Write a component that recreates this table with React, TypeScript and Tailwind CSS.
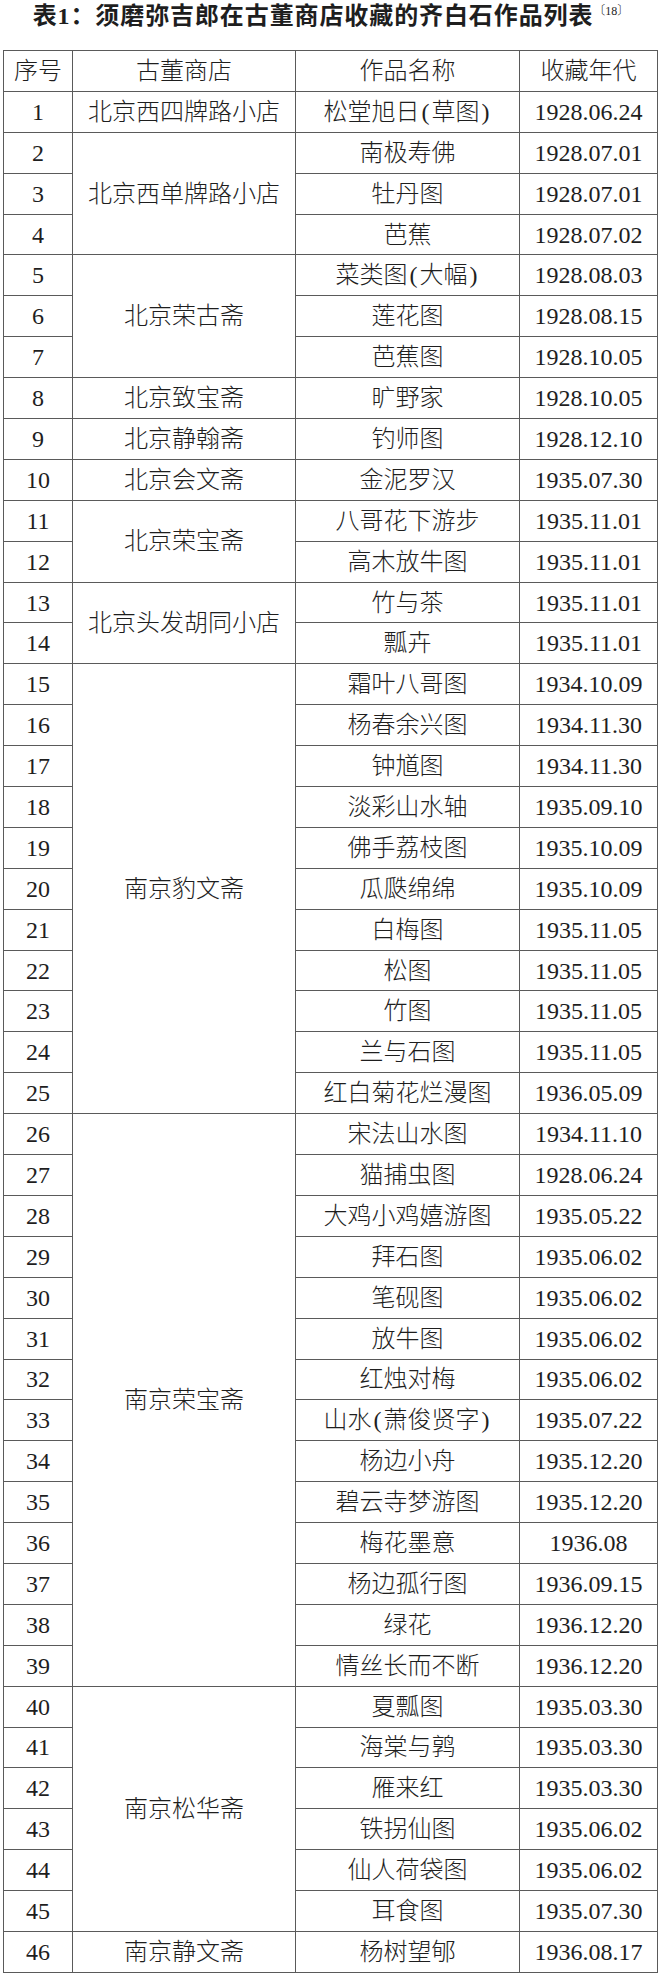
const groups: { store: string; items: [string, string][] }[] = [
  { store: "北京西四牌路小店", items: [["松堂旭日(草图)", "1928.06.24"]] },
  {
    store: "北京西单牌路小店",
    items: [
      ["南极寿佛", "1928.07.01"],
      ["牡丹图", "1928.07.01"],
      ["芭蕉", "1928.07.02"],
    ],
  },
  {
    store: "北京荣古斋",
    items: [
      ["菜类图(大幅)", "1928.08.03"],
      ["莲花图", "1928.08.15"],
      ["芭蕉图", "1928.10.05"],
    ],
  },
  { store: "北京致宝斋", items: [["旷野家", "1928.10.05"]] },
  { store: "北京静翰斋", items: [["钓师图", "1928.12.10"]] },
  { store: "北京会文斋", items: [["金泥罗汉", "1935.07.30"]] },
  {
    store: "北京荣宝斋",
    items: [
      ["八哥花下游步", "1935.11.01"],
      ["高木放牛图", "1935.11.01"],
    ],
  },
  {
    store: "北京头发胡同小店",
    items: [
      ["竹与茶", "1935.11.01"],
      ["瓢卉", "1935.11.01"],
    ],
  },
  {
    store: "南京豹文斋",
    items: [
      ["霜叶八哥图", "1934.10.09"],
      ["杨春余兴图", "1934.11.30"],
      ["钟馗图", "1934.11.30"],
      ["淡彩山水轴", "1935.09.10"],
      ["佛手荔枝图", "1935.10.09"],
      ["瓜瓞绵绵", "1935.10.09"],
      ["白梅图", "1935.11.05"],
      ["松图", "1935.11.05"],
      ["竹图", "1935.11.05"],
      ["兰与石图", "1935.11.05"],
      ["红白菊花烂漫图", "1936.05.09"],
    ],
  },
  {
    store: "南京荣宝斋",
    items: [
      ["宋法山水图", "1934.11.10"],
      ["猫捕虫图", "1928.06.24"],
      ["大鸡小鸡嬉游图", "1935.05.22"],
      ["拜石图", "1935.06.02"],
      ["笔砚图", "1935.06.02"],
      ["放牛图", "1935.06.02"],
      ["红烛对梅", "1935.06.02"],
      ["山水(萧俊贤字)", "1935.07.22"],
      ["杨边小舟", "1935.12.20"],
      ["碧云寺梦游图", "1935.12.20"],
      ["梅花墨意", "1936.08"],
      ["杨边孤行图", "1936.09.15"],
      ["绿花", "1936.12.20"],
      ["情丝长而不断", "1936.12.20"],
    ],
  },
  {
    store: "南京松华斋",
    items: [
      ["夏瓢图", "1935.03.30"],
      ["海棠与鹑", "1935.03.30"],
      ["雁来红", "1935.03.30"],
      ["铁拐仙图", "1935.06.02"],
      ["仙人荷袋图", "1935.06.02"],
      ["耳食图", "1935.07.30"],
    ],
  },
  { store: "南京静文斋", items: [["杨树望郇", "1936.08.17"]] },
];

const cell = "border border-[#5a5a5a] text-center align-middle p-0 h-[40.9px]";

// parens in the scan sit a bit loose from the characters around them
function Work({ text }: { text: string }) {
  return (
    <>
      {text.split(/([()])/).map((part, i) =>
        part === "(" || part === ")" ? (
          <span key={i} className="px-[2px]">
            {part}
          </span>
        ) : (
          part
        )
      )}
    </>
  );
}

export default function App() {
  let n = 0;
  return (
    <div className="w-[660px] bg-white text-[#1e1e1e] font-['Liberation_Serif','Noto_Sans_CJK_SC',serif]">
      <div className="h-[50px] flex justify-center items-start pt-[2px] pl-[2px]">
        <h1 className="text-[24px] leading-[29px] font-bold tracking-[0.9px]">表1：须磨弥吉郎在古董商店收藏的齐白石作品列表</h1>
        <span className="text-[12px] leading-none mt-[3px] font-light whitespace-nowrap">〔18〕</span>
      </div>
      <table className="ml-[3px] w-[654px] border-collapse table-fixed text-[24px] leading-none font-light">
        <colgroup>
          <col className="w-[69px]" />
          <col className="w-[223px]" />
          <col className="w-[224px]" />
          <col className="w-[138px]" />
        </colgroup>
        <thead>
          <tr>
            <th className={cell + " font-light"}>序号</th>
            <th className={cell + " font-light"}>古董商店</th>
            <th className={cell + " font-light"}>作品名称</th>
            <th className={cell + " font-light"}>收藏年代</th>
          </tr>
        </thead>
        <tbody>
          {groups.map((g) =>
            g.items.map(([work, date], i) => {
              n += 1;
              return (
                <tr key={n}>
                  <td className={cell}>{n}</td>
                  {i === 0 && (
                    <td className={cell} rowSpan={g.items.length}>
                      {g.store}
                    </td>
                  )}
                  <td className={cell}>
                    <Work text={work} />
                  </td>
                  <td className={cell}>{date}</td>
                </tr>
              );
            })
          )}
        </tbody>
      </table>
    </div>
  );
}
